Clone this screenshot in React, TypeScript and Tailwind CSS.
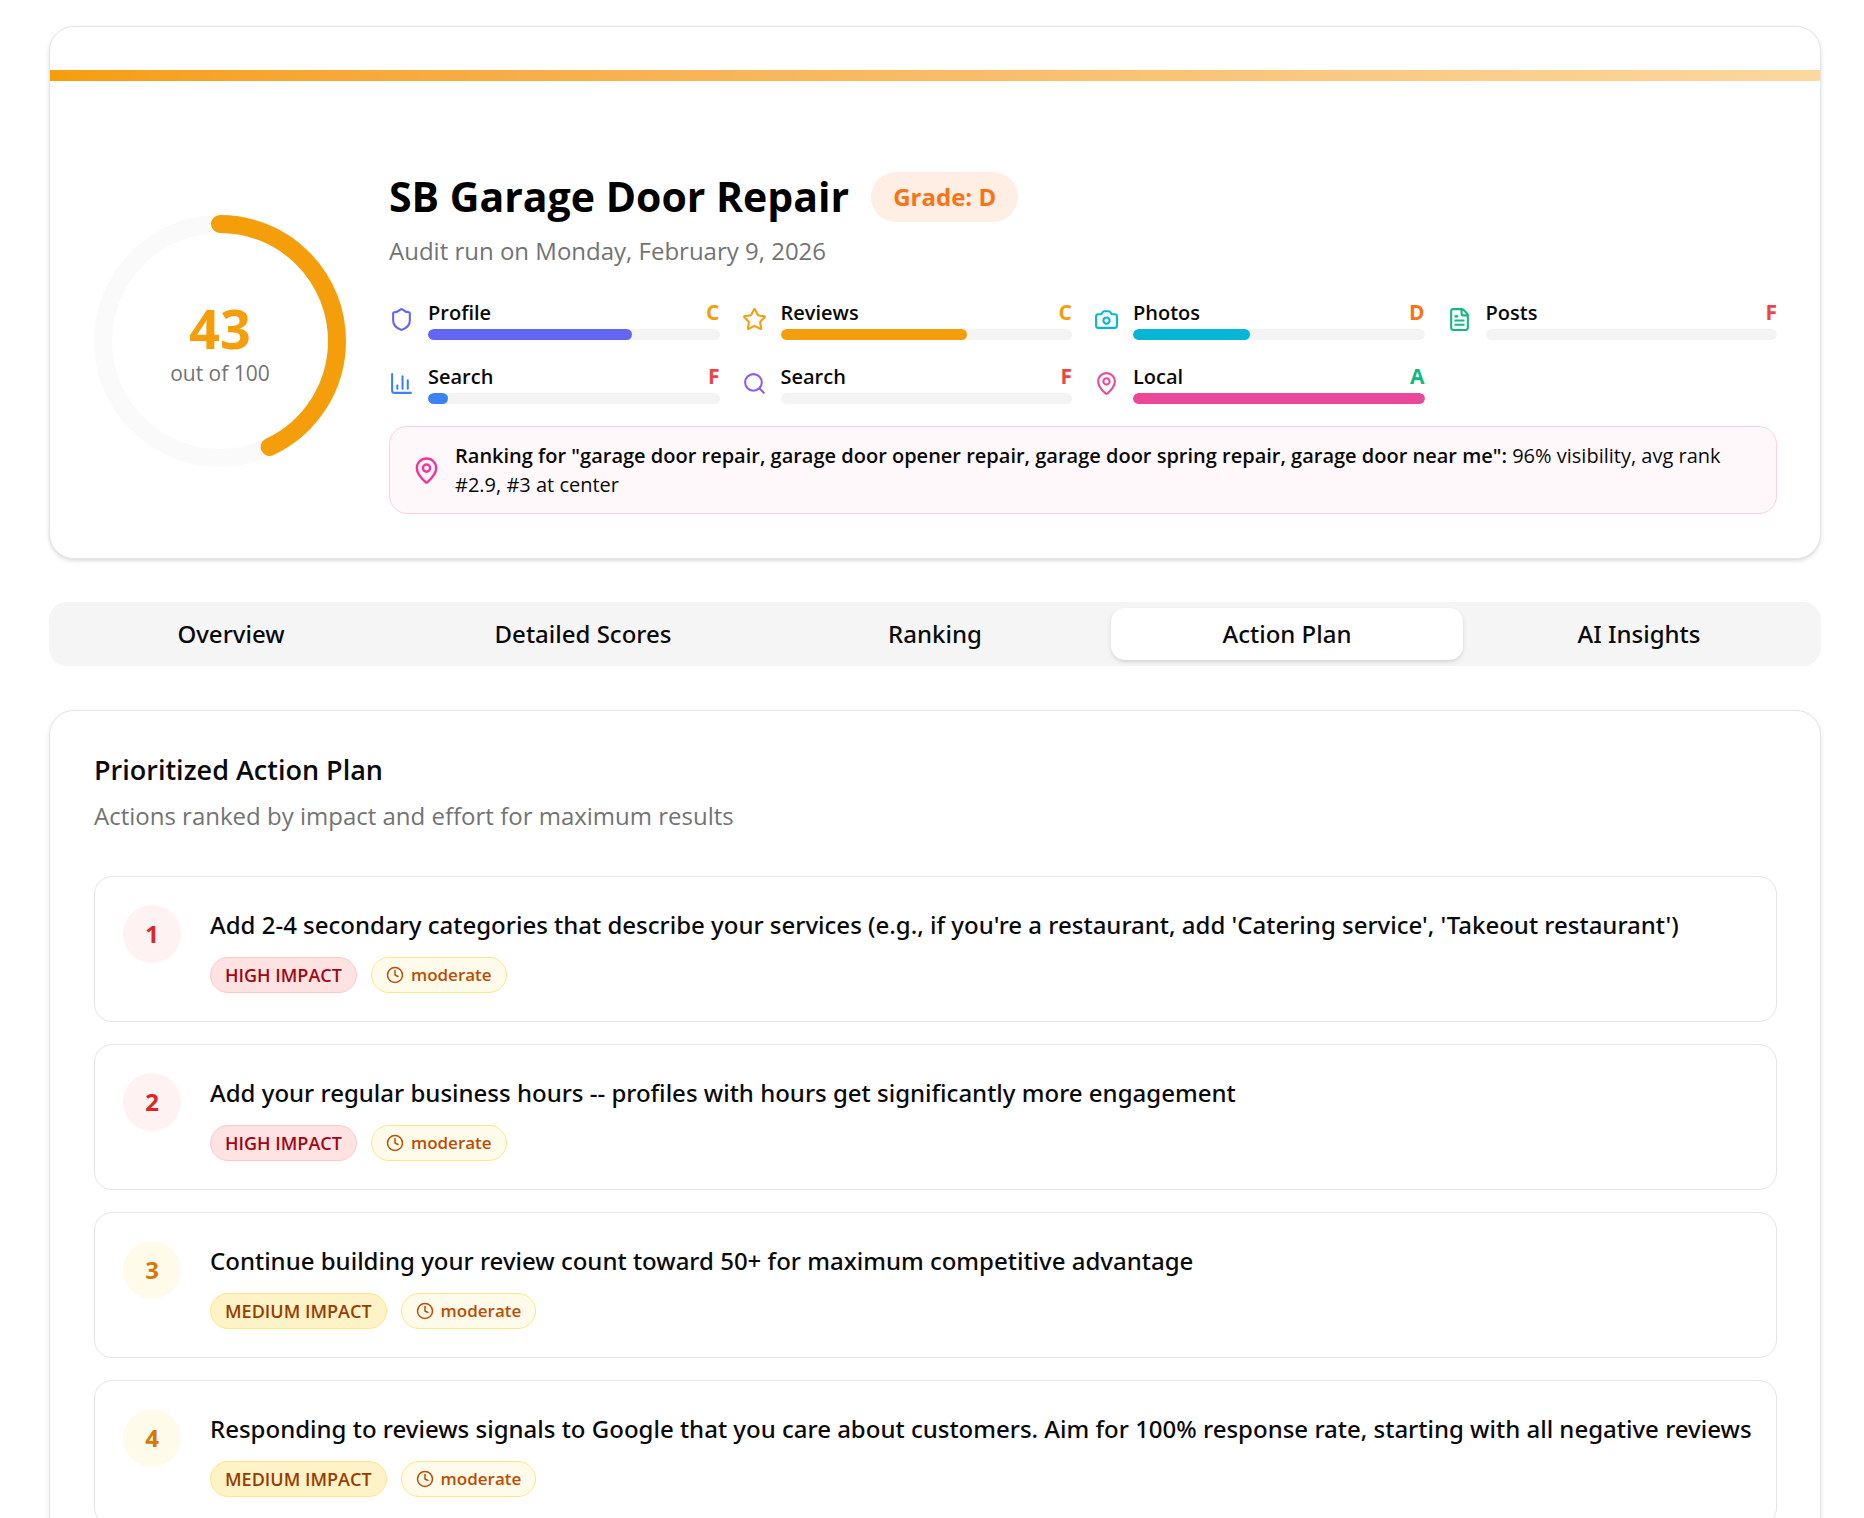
import { useState } from "react";
import {
  Camera,
  ChartColumn,
  Clock,
  FileText,
  MapPin,
  Search,
  Shield,
  Star,
  type LucideIcon,
} from "lucide-react";

type Category = {
  label: string;
  grade: string;
  score: number;
  icon: LucideIcon;
  iconClass: string;
  barClass: string;
  gradeClass: string;
};

const categories: Category[] = [
  { label: "Profile", grade: "C", score: 70, icon: Shield, iconClass: "text-[#6366f1]", barClass: "bg-[#6366f1]", gradeClass: "text-[#f59e0b]" },
  { label: "Reviews", grade: "C", score: 64, icon: Star, iconClass: "text-[#f59e0b]", barClass: "bg-[#f59e0b]", gradeClass: "text-[#f59e0b]" },
  { label: "Photos", grade: "D", score: 40, icon: Camera, iconClass: "text-[#06b6d4]", barClass: "bg-[#06b6d4]", gradeClass: "text-[#f97316]" },
  { label: "Posts", grade: "F", score: 0, icon: FileText, iconClass: "text-[#10b981]", barClass: "bg-[#10b981]", gradeClass: "text-[#ef4444]" },
  { label: "Search", grade: "F", score: 7, icon: ChartColumn, iconClass: "text-[#3b82f6]", barClass: "bg-[#3b82f6]", gradeClass: "text-[#ef4444]" },
  { label: "Search", grade: "F", score: 0, icon: Search, iconClass: "text-[#8b5cf6]", barClass: "bg-[#8b5cf6]", gradeClass: "text-[#ef4444]" },
  { label: "Local", grade: "A", score: 100, icon: MapPin, iconClass: "text-[#ec4899]", barClass: "bg-[#ec4899]", gradeClass: "text-[#10b981]" },
];

const tabs = ["Overview", "Detailed Scores", "Ranking", "Action Plan", "AI Insights"];

const actions = [
  {
    title:
      "Add 2-4 secondary categories that describe your services (e.g., if you're a restaurant, add 'Catering service', 'Takeout restaurant')",
    impact: "high",
    effort: "moderate",
  },
  {
    title: "Add your regular business hours -- profiles with hours get significantly more engagement",
    impact: "high",
    effort: "moderate",
  },
  {
    title: "Continue building your review count toward 50+ for maximum competitive advantage",
    impact: "medium",
    effort: "moderate",
  },
  {
    title:
      "Responding to reviews signals to Google that you care about customers. Aim for 100% response rate, starting with all negative reviews",
    impact: "medium",
    effort: "moderate",
  },
];

function ScoreRing({ score }: { score: number }) {
  const radius = 117;
  const circumference = 2 * Math.PI * radius;

  return (
    <div className="relative size-[252px] shrink-0">
      <svg viewBox="0 0 252 252" className="size-full -rotate-90" aria-hidden="true">
        <circle cx="126" cy="126" r={radius} fill="none" stroke="#fafafa" strokeWidth="18" />
        <circle
          cx="126"
          cy="126"
          r={radius}
          fill="none"
          stroke="#f59e0b"
          strokeWidth="18"
          strokeLinecap="round"
          strokeDasharray={circumference}
          strokeDashoffset={circumference * (1 - score / 100)}
        />
      </svg>
      <div className="absolute inset-0 flex flex-col items-center justify-center pt-1">
        <span className="text-[54px] leading-[60px] font-bold text-[#f59e0b]">{score}</span>
        <span className="text-[21px] leading-[30px] text-[#737373]">out of 100</span>
      </div>
    </div>
  );
}

function CategoryScore({ category }: { category: Category }) {
  const Icon = category.icon;

  return (
    <div className="flex items-center gap-[14px]">
      <Icon className={`size-[25px] shrink-0 ${category.iconClass}`} />
      <div className="min-w-0 flex-1">
        <div className="flex items-center justify-between text-[20px] leading-[29px]">
          <span className="font-semibold">{category.label}</span>
          <span className={`text-[21px] font-bold ${category.gradeClass}`}>{category.grade}</span>
        </div>
        <div className="mt-[2px] h-[11px] overflow-hidden rounded-full bg-[#f4f4f4]">
          <div className={`h-full rounded-full ${category.barClass}`} style={{ width: `${category.score}%` }} />
        </div>
      </div>
    </div>
  );
}

export default function App() {
  const [activeTab, setActiveTab] = useState("Action Plan");

  return (
    <main className="min-h-screen bg-white pt-[26px] pr-[43px] pb-11 pl-[49px] font-['Open_Sans','Noto_Sans',sans-serif] text-[#0a0a0a]">
      <section className="overflow-hidden rounded-[25px] border border-[#e5e5e5] bg-white pt-[43px] pb-11 shadow-[0_2px_5px_rgba(0,0,0,0.1),0_2px_4px_-2px_rgba(0,0,0,0.1)]">
        <div className="h-[11px] bg-linear-to-r from-[#f59e0b] to-[#fbd89d]" />
        <div className="flex items-center gap-[43px] pt-[87px] pr-[43px] pl-11">
          <ScoreRing score={43} />
          <div className="min-w-0 flex-1">
            <div className="flex items-center gap-[22px]">
              <h1 className="text-[41px] leading-[57px] font-bold text-black">SB Garage Door Repair</h1>
              <span className="rounded-full bg-[#f97316]/12 px-[22px] py-[7px] text-[24px] leading-9 font-bold text-[#f97316]">
                Grade: D
              </span>
            </div>
            <p className="mt-2 text-[24px] leading-9 text-[#737373]">Audit run on Monday, February 9, 2026</p>
            <div className="mt-[29px] grid grid-cols-4 gap-[22px]">
              {categories.map((category, i) => (
                <CategoryScore key={i} category={category} />
              ))}
            </div>
            <div className="mt-[22px] flex items-center gap-[14px] rounded-[18px] border border-[#fccee8] bg-[#fef8fb] px-[22px] py-[14px]">
              <MapPin className="size-[29px] shrink-0 text-[#f6339a]" />
              <p className="text-[20px] leading-[29px]">
                <span className="font-semibold">
                  Ranking for "garage door repair, garage door opener repair, garage door spring repair, garage door near
                  me":
                </span>{" "}
                96% visibility, avg rank #2.9, #3 at center
              </p>
            </div>
          </div>
        </div>
      </section>

      <div role="tablist" className="mt-[43px] grid grid-cols-5 rounded-[18px] bg-[#f5f5f5] p-[6px]">
        {tabs.map((tab) => (
          <button
            key={tab}
            type="button"
            role="tab"
            aria-selected={tab === activeTab}
            onClick={() => setActiveTab(tab)}
            className={`rounded-[14px] py-2 font-['Noto_Sans','Open_Sans',sans-serif] text-[24px] leading-9 font-medium ${
              tab === activeTab ? "bg-white shadow-[0_2px_5px_rgba(0,0,0,0.1),0_2px_4px_-2px_rgba(0,0,0,0.1)]" : ""
            }`}
          >
            {tab}
          </button>
        ))}
      </div>

      <section className="mt-11 rounded-[25px] border border-[#e5e5e5] bg-white pt-[43px] pr-[43px] pb-[43px] pl-11 shadow-[0_2px_5px_rgba(0,0,0,0.1)]">
        <h2 className="text-[27px] leading-8 font-semibold">Prioritized Action Plan</h2>
        <p className="mt-3 text-[24px] leading-9 text-[#737373]">
          Actions ranked by impact and effort for maximum results
        </p>
        <ol className="mt-[42px] flex flex-col gap-[22px]">
          {actions.map((action, i) => (
            <li key={i} className="flex items-start gap-[29px] rounded-[18px] border border-[#e5e5e5] py-7 pr-5 pl-7">
              <span
                className={`flex size-[58px] shrink-0 items-center justify-center rounded-full text-[24px] font-bold ${
                  action.impact === "high" ? "bg-red-50 text-[#dc2626]" : "bg-amber-50 text-[#d97706]"
                }`}
              >
                {i + 1}
              </span>
              <div className="min-w-0 flex-1">
                <h3 className="font-['Noto_Sans','Open_Sans',sans-serif] text-[24px] leading-10 font-medium">{action.title}</h3>
                <div className="mt-3 flex items-center gap-[14px] text-[17px] leading-[26px] font-semibold">
                  <span
                    className={`rounded-full border px-[14px] py-1 text-[18px] uppercase ${
                      action.impact === "high"
                        ? "border-red-200 bg-red-100 text-red-800"
                        : "border-amber-200 bg-amber-100 text-amber-800"
                    }`}
                  >
                    {action.impact} impact
                  </span>
                  <span className="flex items-center gap-[7px] rounded-full border border-amber-200 bg-amber-50 px-[14px] py-1 text-amber-700">
                    <Clock className="size-[18px]" />
                    {action.effort}
                  </span>
                </div>
              </div>
            </li>
          ))}
        </ol>
      </section>
    </main>
  );
}
